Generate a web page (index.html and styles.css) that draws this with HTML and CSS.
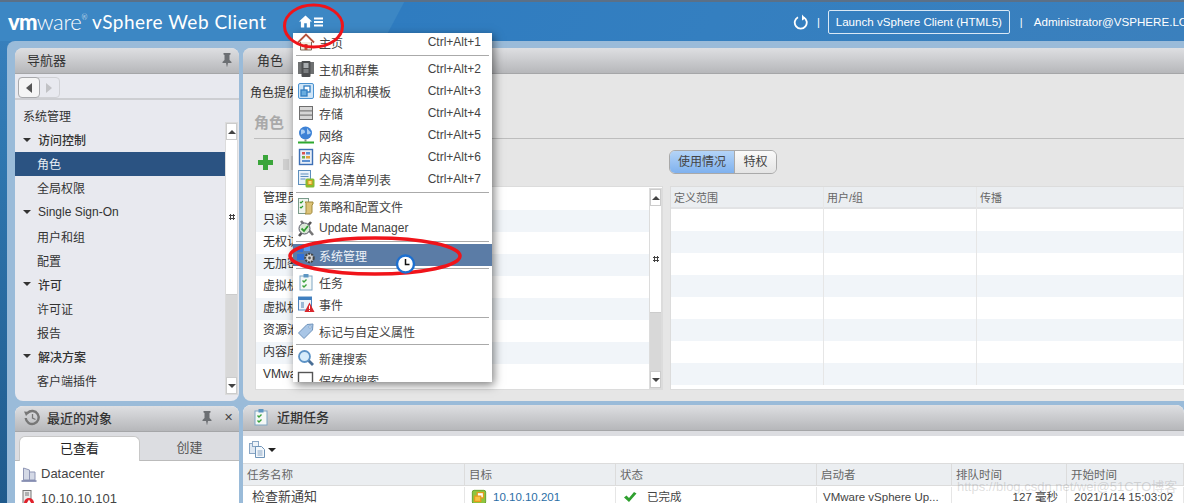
FILE: index.html
```html
<!DOCTYPE html>
<html lang="zh-CN">
<head>
    <meta charset="UTF-8">
    <meta name="viewport" content="width=device-width, initial-scale=1.0">
    <title>vSphere Web Client</title>
    <link rel="stylesheet" href="styles.css">
</head>
<body>

    <!-- Shared icons -->
    <svg class="sprite" width="0" height="0">
        <symbol id="i-tasks" viewBox="0 0 18 18">
            <rect x="3" y="3" width="12" height="14" fill="#f4f8f6" stroke="#7fa6c4"/>
            <rect x="6.5" y="1" width="5" height="3.5" fill="#5d96c2"/>
            <path d="M5.5 7.5l1.5 1.500 2.500-2.500M5.500 12.500l1.500 1.500 2.500-2.500" fill="none" stroke="#3aa23a" stroke-width="1.400"/>
        </symbol>
        <symbol id="i-vm" viewBox="0 0 18 18">
            <rect x="1.500" y="1.500" width="15" height="15" rx="2" fill="#8cc63f" stroke="#5f9a22"/>
            <rect x="7" y="4" width="7" height="6" fill="#fff" stroke="#e59a1c" stroke-width="1.400"/>
            <rect x="4" y="8" width="7" height="6" fill="#f7c343" stroke="#e59a1c" stroke-width="1.400"/>
        </symbol>
        <symbol id="i-pin" viewBox="0 0 12 16">
            <path d="M2.500 1h7v1.500l-1 .5v5l2 2v1H7l-1 4.500L5 11H1.500v-1l2-2V3l-1-.5z" fill="#6c6f73"/>
        </symbol>
    </svg>

    <header class="topbar">
        <div class="brand"><b>vm</b>ware<sup>®</sup></div>
        <div class="product">vSphere Web Client</div>
        <div class="home-btn">
            <svg width="13" height="13" viewBox="0 0 15 14"><path d="M7.500 0L15 7h-2.200v7H9V9H6v5H2.200V7H0z" fill="#fff"/></svg>
            <svg width="9" height="10" viewBox="0 0 10 10"><path d="M0 0h10v2.200H0zM0 3.900h10v2.200H0zM0 7.800h10V10H0z" fill="#fff"/></svg>
        </div>
        <div class="top-right">
            <svg width="15" height="16" viewBox="0 0 15 16"><path d="M5 3.200a6 6 0 1 0 5.500 0" fill="none" stroke="#fff" stroke-width="1.800"/><path d="M9 0.500v6l3.500-2z" fill="#fff"/></svg>
            <span class="sep">|</span>
            <div class="launch">Launch vSphere Client (HTML5)</div>
            <span class="sep">|</span>
            <span class="user">Administrator@VSPHERE.LOCAL</span>
        </div>
    </header>

    <main class="workspace">

        <!-- Navigator -->
        <section class="panel nav-panel">
            <div class="panel-head">
                <span class="nav-title">导航器</span>
                <svg class="pin" width="12" height="16"><use href="#i-pin"/></svg>
            </div>
            <div class="nav-toolbar">
                <div class="nav-arrows">
                    <span class="nav-arrow on"><i class="tri-left"></i></span>
                    <span class="nav-arrow"><i class="tri-right"></i></span>
                </div>
            </div>
            <div class="nav-body">
                <ul class="tree">
                    <li class="tree-root">系统管理</li>
                    <li class="tree-group"><i class="caret"></i>访问控制</li>
                    <li class="tree-item active">角色</li>
                    <li class="tree-item">全局权限</li>
                    <li class="tree-group"><i class="caret"></i>Single Sign-On</li>
                    <li class="tree-item">用户和组</li>
                    <li class="tree-item">配置</li>
                    <li class="tree-group"><i class="caret"></i>许可</li>
                    <li class="tree-item">许可证</li>
                    <li class="tree-item">报告</li>
                    <li class="tree-group"><i class="caret"></i>解决方案</li>
                    <li class="tree-item">客户端插件</li>
                </ul>
                <div class="scrollbar nav-scroll">
                    <span class="sb-btn"><i class="tri-up"></i></span>
                    <span class="sb-thumb nav-thumb"><em class="dots"></em></span>
                    <span class="sb-track"></span>
                    <span class="sb-btn"><i class="tri-down"></i></span>
                </div>
            </div>
        </section>

        <!-- Roles -->
        <section class="panel roles-panel">
            <div class="panel-head"><span class="roles-title">角色</span></div>
            <div class="roles-body">
                <p class="roles-desc">角色提供了一种聚合权限的方式</p>
                <h3 class="roles-heading">角色</h3>
                <div class="roles-actions">
                    <svg width="15" height="15" viewBox="0 0 15 15"><path d="M5 0h5v5h5v5h-5v5H5v-5H0V5h5z" fill="#3aa53a"/></svg>
                    <svg class="copy-ico" width="14" height="15" viewBox="0 0 14 15"><path d="M0 4h6v11H0zM8 1h6v14H8z" fill="#cfcfcf"/></svg>
                    <div class="btn-group">
                        <span class="seg seg-on">使用情况</span>
                        <span class="seg">特权</span>
                    </div>
                </div>
                <div class="roles-tables">
                    <div class="role-list">
                        <ul class="role-rows">
                            <li>管理员</li>
                            <li>只读</li>
                            <li>无权访问</li>
                            <li>无加密权限</li>
                            <li>虚拟机用户</li>
                            <li>虚拟机管理员</li>
                            <li>资源池管理员</li>
                            <li>内容库管理员</li>
                            <li>VMware 用户</li>
                        </ul>
                        <div class="scrollbar list-scroll">
                            <span class="sb-btn"><i class="tri-up"></i></span>
                            <span class="sb-thumb list-thumb"><em class="dots"></em></span>
                            <span class="sb-track"></span>
                            <span class="sb-btn"><i class="tri-down"></i></span>
                        </div>
                    </div>
                    <div class="usage">
                        <div class="usage-row usage-head"><span>定义范围</span><span>用户/组</span><span>传播</span></div>
                        <div class="usage-row"><span></span><span></span><span></span></div>
                        <div class="usage-row"><span></span><span></span><span></span></div>
                        <div class="usage-row"><span></span><span></span><span></span></div>
                        <div class="usage-row"><span></span><span></span><span></span></div>
                        <div class="usage-row"><span></span><span></span><span></span></div>
                        <div class="usage-row"><span></span><span></span><span></span></div>
                        <div class="usage-row"><span></span><span></span><span></span></div>
                        <div class="usage-row"><span></span><span></span><span></span></div>
                    </div>
                </div>
            </div>
        </section>

        <!-- Recent objects -->
        <section class="panel recent-panel">
            <div class="panel-head">
                <svg class="recent-ico" width="17" height="17" viewBox="0 0 17 17"><path d="M3.500 4a6.500 6.500 0 1 1-1.800 5" fill="none" stroke="#777" stroke-width="2.400"/><path d="M0 2.500l6 .5-4 4z" fill="#777"/><path d="M8.500 5v4l3 1.500" fill="none" stroke="#777" stroke-width="1.300"/></svg>
                <span class="recent-title">最近的对象</span>
                <svg class="pin" width="12" height="16"><use href="#i-pin"/></svg>
                <span class="close">✕</span>
            </div>
            <div class="tabs">
                <span class="tab tab-on">已查看</span>
                <span class="tab">创建</span>
            </div>
            <ul class="recent-list">
                <li>
                    <svg width="16" height="16" viewBox="0 0 16 16"><path d="M2.500 14V2l6 2v10zM8.500 6H14v8H8.500z" fill="#d4d9e6" stroke="#8f96b5"/><path d="M0.500 15h15" stroke="#6f78a3" stroke-width="1.500"/></svg>
                    Datacenter
                </li>
                <li>
                    <svg width="16" height="18" viewBox="0 0 16 18"><rect x="2" y="0.500" width="8" height="14" fill="#e9e9e9" stroke="#777"/><path d="M4 3h4M4 5h4" stroke="#777"/><circle cx="8" cy="13" r="5" fill="#e0202a"/><path d="M8 9.500l3 5H5z" fill="#fff"/></svg>
                    10.10.10.101
                </li>
            </ul>
        </section>

        <!-- Recent tasks -->
        <section class="panel tasks-panel">
            <div class="panel-head">
                <svg class="tasks-ico" width="18" height="18"><use href="#i-tasks"/></svg>
                <span class="tasks-title">近期任务</span>
            </div>
            <div class="tasks-strip"></div>
            <div class="tasks-toolbar">
                <svg width="17" height="17" viewBox="0 0 17 17"><rect x="0.500" y="2.500" width="7" height="10" fill="#dfe8f2" stroke="#8aa6c4"/><rect x="3.500" y="0.500" width="6" height="5" fill="#eef3f8" stroke="#8aa6c4"/><path d="M6.500 5.500h6l3 3v8h-9z" fill="#f3f7fb" stroke="#6f94b8"/><path d="M8.500 10h5M8.500 12h5M8.500 14h5" stroke="#8aa6c4"/></svg>
                <i class="tri-drop"></i>
            </div>
            <div class="task-row task-head">
                <span class="c-name">任务名称</span>
                <span class="c-target">目标</span>
                <span class="c-status">状态</span>
                <span class="c-by">启动者</span>
                <span class="c-queue">排队时间</span>
                <span class="c-start">开始时间</span>
            </div>
            <div class="task-row task-data">
                <span class="c-name">检查新通知</span>
                <span class="c-target">
                    <svg width="16" height="16"><use href="#i-vm"/></svg>
                    <a class="task-link">10.10.10.201</a>
                </span>
                <span class="c-status">
                    <svg width="14" height="12" viewBox="0 0 14 12"><path d="M1 6.500l2.500-2 2.500 2.500L11 1l2.500 1.500L6 11z" fill="#2fa02f"/></svg>
                    已完成
                </span>
                <span class="c-by">VMware vSphere Up...</span>
                <span class="c-queue">127 毫秒</span>
                <span class="c-start">2021/1/14 15:03:02</span>
            </div>
        </section>
    </main>

    <!-- Home dropdown -->
    <nav class="menu">
        <div class="menu-item">
            <svg class="ico" viewBox="0 0 18 18"><path d="M1 9.500l8-8 8 8" fill="none" stroke="#b5533c" stroke-width="1.800"/><path d="M3.500 9v8h11V9" fill="#f2ece0" stroke="#7a6a5a"/><rect x="7.500" y="11" width="3" height="6" fill="#b5533c"/></svg>
            <span>主页</span><kbd>Ctrl+Alt+1</kbd>
        </div>
        <hr>
        <div class="menu-item">
            <svg class="ico" viewBox="0 0 18 18"><rect x="1" y="2" width="4" height="12" fill="#6f7172"/><rect x="13" y="2" width="4" height="12" fill="#6f7172"/><rect x="4.500" y="1" width="9" height="16" rx="1" fill="#4d4f51"/><rect x="6.500" y="3" width="5" height="5" fill="#a9adb0"/><path d="M6.500 10h5M6.500 12h5" stroke="#a9adb0"/></svg>
            <span>主机和群集</span><kbd>Ctrl+Alt+2</kbd>
        </div>
        <div class="menu-item">
            <svg class="ico" viewBox="0 0 18 18"><rect x="1.500" y="1.500" width="15" height="15" rx="1.500" fill="#cfe5f7" stroke="#4b93d1"/><rect x="7" y="4" width="6" height="6" fill="#fff" stroke="#2f7cc0" stroke-width="1.300"/><rect x="4" y="8" width="6" height="6" fill="#68acdf" stroke="#2f7cc0" stroke-width="1.300"/></svg>
            <span>虚拟机和模板</span><kbd>Ctrl+Alt+3</kbd>
        </div>
        <div class="menu-item">
            <svg class="ico" viewBox="0 0 18 18"><rect x="2.500" y="2.500" width="13" height="13" fill="#d6d6d6" stroke="#6e6e6e"/><path d="M3 6.800h12M3 11.200h12" stroke="#7e7e7e" stroke-width="1.200"/></svg>
            <span>存储</span><kbd>Ctrl+Alt+4</kbd>
        </div>
        <div class="menu-item">
            <svg class="ico" viewBox="0 0 18 18"><circle cx="8.500" cy="7" r="6.500" fill="#3d82d6"/><path d="M4 4c2-1 4 0 4 2s-3 1-4 3M10 2c1 2 3 3 4 5-2 1-3 2-4 1" fill="#a9cdf2"/><path d="M8.500 13.500v2" stroke="#888" stroke-width="2"/><rect x="1" y="15.500" width="16" height="2" fill="#2fa82f"/></svg>
            <span>网络</span><kbd>Ctrl+Alt+5</kbd>
        </div>
        <div class="menu-item">
            <svg class="ico" viewBox="0 0 18 18"><rect x="2.500" y="1.500" width="13" height="15" fill="#e8eef7" stroke="#3d6fb5" stroke-width="1.400"/><rect x="5" y="4" width="3" height="2.500" fill="#d9534f"/><rect x="9" y="4" width="4" height="2.500" fill="#5b8fd0"/><rect x="5" y="8" width="3" height="2.500" fill="#6fae4a"/><rect x="9" y="8" width="4" height="2.500" fill="#e2a33a"/><rect x="5" y="12" width="8" height="2" fill="#5b8fd0"/></svg>
            <span>内容库</span><kbd>Ctrl+Alt+6</kbd>
        </div>
        <div class="menu-item">
            <svg class="ico" viewBox="0 0 18 18"><rect x="1.500" y="0.500" width="12" height="14" fill="#eaf2fa" stroke="#5d8fbd"/><path d="M3.500 4h8M3.500 6.500h8M3.500 9h5" stroke="#5d8fbd"/><rect x="8.500" y="8.500" width="9" height="9" rx="1.500" fill="#86bc30"/><rect x="11" y="10.500" width="4" height="4" fill="#f7e27a" stroke="#d99a1c"/></svg>
            <span>全局清单列表</span><kbd>Ctrl+Alt+7</kbd>
        </div>
        <hr>
        <div class="menu-item">
            <svg class="ico" viewBox="0 0 18 18"><rect x="1.500" y="1.500" width="10" height="15" fill="#eef4ee" stroke="#7a9a8a"/><path d="M3 5l1 1 2-2M3 10l1 1 2-2" fill="none" stroke="#2f9a2f" stroke-width="1.200"/><path d="M8 5h8v2l-1 1v7c0 1-1 2-2 2H8c1-1 1-2 1-3V6z" fill="#dcc277" stroke="#a08a3c"/></svg>
            <span>策略和配置文件</span>
        </div>
        <div class="menu-item">
            <svg class="ico" viewBox="0 0 18 18"><path d="M2 17L14 3" stroke="#555" stroke-width="2.600"/><path d="M4 2l12 14" stroke="#777" stroke-width="2.600"/><circle cx="7.500" cy="9.500" r="5.500" fill="#dbe8d6" stroke="#556" stroke-width="1"/><path d="M4.500 9.500l2.500 2.500 4-5" fill="none" stroke="#2f9a2f" stroke-width="1.800"/></svg>
            <span>Update Manager</span>
        </div>
        <hr>
        <div class="menu-item selected">
            <svg class="ico" viewBox="0 0 18 18"><rect x="0" y="1" width="6" height="5" fill="#2f6fd8"/><rect x="7" y="0" width="6" height="5" fill="#5a9af0"/><rect x="0" y="8" width="7" height="6" fill="#2f6fd8"/><circle cx="12.500" cy="12" r="4.200" fill="#d4d4d4" stroke="#444" stroke-width="2" stroke-dasharray="2 1"/><circle cx="12.500" cy="12" r="1.400" fill="#555"/></svg>
            <span>系统管理</span>
        </div>
        <hr>
        <div class="menu-item">
            <svg class="ico"><use href="#i-tasks"/></svg>
            <span>任务</span>
        </div>
        <div class="menu-item">
            <svg class="ico" viewBox="0 0 18 18"><rect x="1.500" y="2" width="13" height="13" fill="#eef3f9" stroke="#4f85bd"/><rect x="1.500" y="2" width="13" height="3" fill="#3f7fc0"/><rect x="4" y="7" width="3" height="6" fill="#9ab6d4"/><path d="M12.500 7.500l5 9.500h-10z" fill="#d8262c"/><path d="M12.500 10.500v3.500M12.500 15v1" stroke="#fff"/></svg>
            <span>事件</span>
        </div>
        <hr>
        <div class="menu-item">
            <svg class="ico" viewBox="0 0 18 18"><path d="M1.500 11L10 2.500l6-.5-.5 6L7 16.500z" fill="#a9c6e6" stroke="#6f93bb"/><circle cx="13" cy="5" r="1.200" fill="#fff" stroke="#6f93bb" stroke-width=".7"/></svg>
            <span>标记与自定义属性</span>
        </div>
        <hr>
        <div class="menu-item">
            <svg class="ico" viewBox="0 0 18 18"><path d="M11 11l5 5" stroke="#4a6f96" stroke-width="2.800"/><circle cx="7.500" cy="7.500" r="5.500" fill="#d6ecfb" stroke="#5d93c6" stroke-width="1.800"/></svg>
            <span>新建搜索</span>
        </div>
        <div class="menu-item">
            <svg class="ico" viewBox="0 0 18 18"><rect x="1.500" y="1.500" width="14" height="14" fill="#fff" stroke="#555" stroke-width="1.400"/></svg>
            <span>保存的搜索</span>
        </div>
    </nav>

    <!-- Hand-drawn marks and wait cursor on top of the screenshot -->
    <svg class="marks" width="1184" height="503" viewBox="0 0 1184 503">
        <ellipse cx="313.500" cy="26" rx="29" ry="21" fill="none" stroke="#f0141a" stroke-width="3"/>
        <ellipse cx="375" cy="256" rx="85" ry="18" fill="none" stroke="#f0141a" stroke-width="3.500"/>
        <circle cx="405.500" cy="264" r="8.500" fill="#fff" stroke="#1c6fd0" stroke-width="2.400"/>
        <path d="M405.500 259v5.500h4" fill="none" stroke="#111" stroke-width="1.500"/>
    </svg>

    <div class="watermark">https://blog.csdn.net/wei@51CTO博客</div>

</body>
</html>
```

FILE: styles.css
```css
* {
    box-sizing: border-box;
}
html, body {
    height: 100%;
}
body {
    margin: 0;
    overflow: hidden;
    position: relative;
    font-family: "Liberation Sans", "Noto Sans CJK SC", Arial, sans-serif;
    font-size: 12px;
    color: #333;
    background: linear-gradient(180deg, #3a82c0 0%, #2f77b0 30%, #1f5a8c 100%);
}
ul {
    list-style: none;
    margin: 0;
    padding: 0;
}
.sprite {
    position: absolute;
}

/* top bar */
.topbar {
    height: 41px;
    display: flex;
    align-items: center;
    color: #fff;
    border-top: 2px solid #5b7087;
    background: linear-gradient(118deg, #3c87c4 0, #3c87c4 33.500%, #2f7cc0 33.600%, #347fc0 60%, #3b80bd 100%);
}
.topbar > * {
    flex: none;
}
.brand {
    width: 84px;
    margin-left: 8px;
    font-family: Lato, sans-serif;
    font-size: 22px;
    font-weight: 300;
    letter-spacing: -0.300px;
    line-height: 26px;
    white-space: nowrap;
}
.brand b {
    font-weight: 900;
    letter-spacing: -0.800px;
}
.brand sup {
    font-size: 7px;
    vertical-align: 10px;
    line-height: 0;
}
.product {
    width: 199px;
    font-family: Lato, sans-serif;
    font-size: 19px;
    letter-spacing: 0.500px;
    white-space: nowrap;
}
.home-btn {
    width: 40px;
    margin-left: 8px;
    display: flex;
    align-items: center;
    gap: 2px;
}
.top-right {
    margin-left: 454px;
    display: flex;
    align-items: center;
    font-size: 11.600px;
    white-space: nowrap;
}
.sep {
    margin: 0 8px 0 9px;
    font-size: 11px;
}
.launch {
    width: 182px;
    height: 24px;
    margin-right: 1px;
    line-height: 21px;
    text-align: center;
    border: 1px solid #d9e8f5;
    border-radius: 2px;
}
.user {
    margin-left: 3px;
}

/* workspace grid */
.workspace {
    height: 462px;
    margin-left: 7px;
    padding: 7px 0 0 8px;
    background: #9abbd9;
    border-radius: 8px 0 0 0;
    display: grid;
    grid-template-columns: 224px 1fr;
    grid-template-rows: 353px 1fr;
    column-gap: 4px;
    row-gap: 4px;
}
.panel {
    border-radius: 8px 8px 0 0;
    overflow: hidden;
    min-width: 0;
}
.panel-head {
    height: 26px;
    display: flex;
    align-items: center;
    padding-bottom: 2px;
    font-size: 13px;
    color: #333;
    background: linear-gradient(180deg, #dedfe2 0%, #b6b7ba 100%);
    border-bottom: 1px solid #a5a6a8;
}
.pin {
    margin-left: auto;
    margin-right: 6px;
}

/* navigator */
.nav-panel {
    background: #e8e9ef;
    border-radius: 8px;
}
.nav-title {
    margin-left: 12px;
}
.nav-toolbar {
    height: 26px;
    padding: 3px 0 0 3px;
    border-bottom: 2px solid #cdced2;
}
.nav-arrows {
    width: 42px;
    height: 21px;
    display: flex;
    border: 1px solid #d0d1d5;
    border-radius: 4px;
}
.nav-arrow {
    flex: 1;
    display: flex;
    align-items: center;
    justify-content: center;
    opacity: 0.4;
}
.nav-arrow.on {
    opacity: 1;
    background: #f5f5f5;
    border: 1px solid #a8a9ac;
    border-radius: 4px;
    margin: -1px 0 -1px -1px;
}
.tri-left, .tri-right, .tri-up, .tri-down, .caret, .tri-drop {
    display: block;
    width: 0;
    height: 0;
    border-style: solid;
    border-color: transparent;
}
.tri-left {
    border-width: 5px 6px 5px 0;
    border-right-color: #555;
}
.tri-right {
    border-width: 5px 0 5px 6px;
    border-left-color: #888;
}
.tri-up {
    border-width: 0 4px 4px;
    border-bottom-color: #444;
}
.tri-down {
    border-width: 4px 4px 0;
    border-top-color: #444;
}
.caret {
    border-width: 4px 4px 0;
    border-top-color: #333;
    margin-right: 7px;
}
.nav-body {
    display: flex;
    height: 301px;
    position: relative;
}
.tree {
    flex: 1;
    padding-top: 4px;
}
.tree li {
    height: 24.100px;
    display: flex;
    align-items: center;
    color: #333;
    padding-bottom: 1px;
}
.tree-root {
    padding-left: 8px;
}
.tree-group {
    padding-left: 8px;
    font-weight: 500;
}
.tree-item {
    padding-left: 22px;
    margin-right: -13px;
    position: relative;
}
.tree li.tree-item.active {
    background: #2b5382;
    color: #e6ecf3;
}

/* scrollbars */
.scrollbar {
    width: 13px;
    display: flex;
    flex-direction: column;
    background: #d8d8d8;
    border: 1px solid #dcdcdc;
    position: relative;
}
.nav-scroll {
    margin: 22px 1px 5px 0;
    height: 273px;
}
.list-scroll {
    height: 201px;
    flex: none;
}
.sb-btn {
    height: 17px;
    flex: none;
    background: #fff;
    border: 1px solid #ccc;
    display: flex;
    align-items: center;
    justify-content: center;
}
.sb-thumb {
    background: #fff;
    border-bottom: 1px solid #ccc;
    flex: none;
    display: flex;
    align-items: center;
    justify-content: center;
}
.nav-thumb {
    height: 155px;
}
.list-thumb {
    height: 107px;
}
.sb-track {
    flex: 1;
}
.dots {
    width: 6px;
    height: 6px;
    background: radial-gradient(circle, #444 1px, transparent 1.300px) 0 0 / 3px 3px;
}

/* roles panel */
.roles-panel {
    background: #e6e6e6;
    border-radius: 8px 0 0 8px;
}
.roles-title {
    margin-left: 14px;
}
.roles-body {
    padding-top: 10px;
}
.roles-desc {
    margin: 0 0 0 7px;
    height: 18px;
    line-height: 18px;
}
.roles-heading {
    margin: 8px 0 0 11px;
    height: 29px;
    font-size: 15px;
    font-weight: 700;
    color: #a9a9a9;
    line-height: 26px;
    border-bottom: 1px solid #bdbdbd;
}
.roles-actions {
    height: 47px;
    display: flex;
    align-items: center;
    padding: 0 0 0 15px;
}
.copy-ico {
    margin-left: 10px;
}
.btn-group {
    margin-left: 372px;
    display: flex;
    height: 24px;
    margin-top: -2px;
    border: 1px solid #a9a9a9;
    border-radius: 6px;
    overflow: hidden;
    color: #444;
    font-size: 12px;
    line-height: 22px;
}
.seg {
    width: 41px;
    text-align: center;
    background: linear-gradient(180deg, #fafafa, #e4e4e4);
}
.seg-on {
    width: 65px;
    background: linear-gradient(180deg, #b4d4f7, #7fb1ee);
    border-right: 1px solid #a9a9a9;
}
.roles-tables {
    display: flex;
    margin-left: 12px;
    height: 204px;
}
.role-list {
    width: 408px;
    display: flex;
    background: #fff;
    border: 1px solid #dcdcdc;
    align-items: flex-start;
    padding-top: 1px;
}
.role-rows {
    flex: 1;
    min-width: 0;
}
.role-rows li {
    height: 22px;
    padding: 2px 0 0 7px;
    line-height: 17px;
    overflow: hidden;
    white-space: nowrap;
}
.role-rows li:nth-child(even) {
    background: #f1f5f9;
}
.usage {
    flex: 1;
    margin-left: 7px;
    background: #fff;
    border: 1px solid #dcdcdc;
    border-right: 0;
    overflow: hidden;
}
.usage-row {
    height: 22px;
    display: grid;
    grid-template-columns: 153px 153px 1fr;
}
.usage-row span {
    border-right: 1px solid #e6e6e6;
}
.usage-row:nth-child(odd) {
    background: #f1f5f9;
}
.usage-head, .usage-row.usage-head:nth-child(odd) {
    background: #ebeef1;
    border-bottom: 2px solid #e2e3e5;
    color: #666;
    font-size: 11px;
    line-height: 22px;
}
.usage-head span {
    padding-left: 3px;
}

/* recent objects */
.recent-panel {
    background: #fff;
    margin-top: 1px;
}
.recent-ico {
    margin-left: 9px;
}
.recent-title {
    margin-left: 6px;
    font-weight: 500;
}
.recent-panel .pin {
    margin-right: 11px;
}
.close {
    margin-right: 6px;
    font-size: 11px;
    color: #444;
}
.tabs {
    height: 29px;
    padding: 4px 0 0 4px;
    display: flex;
    background: #dcdde1;
    border-bottom: 1px solid #bbb;
}
.tab {
    flex: 1;
    text-align: center;
    font-size: 13px;
    line-height: 24px;
    color: #555;
}
.tab.tab-on {
    flex: none;
    width: 121px;
    background: #fff;
    color: #222;
    border: 1px solid #c8c8c8;
    border-bottom: 0;
    border-radius: 6px 6px 0 0;
    height: 25px;
}
.recent-list li {
    height: 25px;
    padding-left: 6px;
    display: flex;
    align-items: center;
    gap: 4px;
    font-size: 13px;
    color: #444;
}

/* recent tasks */
.tasks-panel {
    background: #fff;
}
.tasks-ico {
    margin-left: 9px;
}
.tasks-title {
    margin-left: 7px;
    font-weight: 500;
}
.tasks-strip {
    height: 5px;
    background: #dcdde1;
}
.tasks-toolbar {
    height: 27px;
    padding-left: 6px;
    display: flex;
    align-items: center;
    gap: 2px;
}
.tri-drop {
    border-width: 4px 4px 0;
    border-top-color: #222;
}
.task-row {
    display: grid;
    grid-template-columns: 222px 151px 201px 135px 115px 1fr;
}
.task-head {
    height: 23px;
    background: #ebeef1;
    border-top: 1px solid #dcdcdc;
    border-bottom: 1px solid #dcdcdc;
    color: #666;
    line-height: 22px;
    font-size: 11.500px;
}
.task-head span {
    padding-left: 4px;
    border-right: 1px solid #dcdcdc;
}
.task-data {
    height: 24px;
    padding-top: 1px;
    line-height: 20px;
    font-size: 11.500px;
    color: #444;
}
.task-data span {
    display: flex;
    align-items: center;
    height: 20px;
    white-space: nowrap;
    border-right: 1px solid #e6e6e6;
}
.task-data .c-name {
    padding-left: 9px;
    font-size: 13px;
}
.task-data .c-target {
    padding-left: 6px;
    gap: 6px;
}
.task-link {
    color: #2a6ea6;
}
.task-data .c-status {
    padding-left: 7px;
    gap: 10px;
}
.task-data .c-by {
    padding-left: 6px;
}
.task-data .c-queue {
    justify-content: flex-end;
    padding-right: 8px;
}
.task-data .c-start {
    padding-left: 7px;
}

/* home dropdown */
.menu {
    position: absolute;
    left: 293px;
    top: 33px;
    width: 199px;
    height: 349px;
    overflow: hidden;
    background: #fff;
    box-shadow: 2px 3px 9px rgba(0, 0, 0, 0.5);
}
.menu-item {
    height: 22px;
    display: flex;
    align-items: center;
    padding: 0 11px 0 4px;
    color: #444;
    white-space: nowrap;
}
.menu-item:first-child {
    margin-top: -2px;
}
.menu-item.selected {
    background: #5b7ca6;
    color: #eef2f7;
}
.ico {
    width: 18px;
    height: 18px;
    flex: none;
    margin-right: 4px;
}
.menu kbd {
    margin-left: auto;
    font-family: inherit;
    font-size: 12px;
}
.menu hr {
    margin: 2px 3px 2px 3px;
    height: 1px;
    border: 0;
    background: #aaa;
}

/* overlays */
.marks {
    position: absolute;
    left: 0;
    top: 0;
    pointer-events: none;
}
.watermark {
    position: absolute;
    left: 957px;
    top: 476px;
    font-size: 13px;
    white-space: nowrap;
    color: rgba(120, 120, 120, 0.25);
}
```
